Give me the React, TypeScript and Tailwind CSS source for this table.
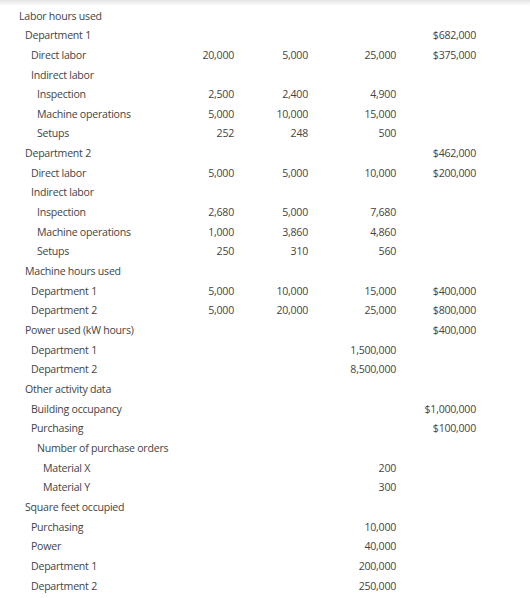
type Row = {
  label: string;
  level: number;
  cols?: [string, string, string, string];
};

const rows: Row[] = [
  { label: 'Labor hours used', level: 0 },
  { label: 'Department 1', level: 1, cols: ['', '', '', '$682,000'] },
  { label: 'Direct labor', level: 2, cols: ['20,000', '5,000', '25,000', '$375,000'] },
  { label: 'Indirect labor', level: 2 },
  { label: 'Inspection', level: 3, cols: ['2,500', '2,400', '4,900', ''] },
  { label: 'Machine operations', level: 3, cols: ['5,000', '10,000', '15,000', ''] },
  { label: 'Setups', level: 3, cols: ['252', '248', '500', ''] },
  { label: 'Department 2', level: 1, cols: ['', '', '', '$462,000'] },
  { label: 'Direct labor', level: 2, cols: ['5,000', '5,000', '10,000', '$200,000'] },
  { label: 'Indirect labor', level: 2 },
  { label: 'Inspection', level: 3, cols: ['2,680', '5,000', '7,680', ''] },
  { label: 'Machine operations', level: 3, cols: ['1,000', '3,860', '4,860', ''] },
  { label: 'Setups', level: 3, cols: ['250', '310', '560', ''] },
  { label: 'Machine hours used', level: 1 },
  { label: 'Department 1', level: 2, cols: ['5,000', '10,000', '15,000', '$400,000'] },
  { label: 'Department 2', level: 2, cols: ['5,000', '20,000', '25,000', '$800,000'] },
  { label: 'Power used (kW hours)', level: 1, cols: ['', '', '', '$400,000'] },
  { label: 'Department 1', level: 2, cols: ['', '', '1,500,000', ''] },
  { label: 'Department 2', level: 2, cols: ['', '', '8,500,000', ''] },
  { label: 'Other activity data', level: 1 },
  { label: 'Building occupancy', level: 2, cols: ['', '', '', '$1,000,000'] },
  { label: 'Purchasing', level: 2, cols: ['', '', '', '$100,000'] },
  { label: 'Number of purchase orders', level: 3 },
  { label: 'Material X', level: 4, cols: ['', '', '200', ''] },
  { label: 'Material Y', level: 4, cols: ['', '', '300', ''] },
  { label: 'Square feet occupied', level: 1 },
  { label: 'Purchasing', level: 2, cols: ['', '', '10,000', ''] },
  { label: 'Power', level: 2, cols: ['', '', '40,000', ''] },
  { label: 'Department 1', level: 2, cols: ['', '', '200,000', ''] },
  { label: 'Department 2', level: 2, cols: ['', '', '250,000', ''] },
];

// indent per level, in px from the left edge
const indent = ['pl-[19px]', 'pl-[25px]', 'pl-[31px]', 'pl-[37px]', 'pl-[43px]'];

export default function App() {
  return (
    <div
      className="w-[530px] h-[598px] bg-white text-[10.6px] tracking-[-0.25px] text-[#444] overflow-hidden"
      style={{ fontFamily: '"Open Sans", "Noto Sans", sans-serif' }}
    >
      {/* top shadow */}
      <div className="h-[6px] bg-gradient-to-b from-[#e4e4e4] to-white" />

      <div className="flex flex-col">
        {rows.map((row, i) => (
          <div
            key={i}
            className="grid grid-cols-[174px_60px_74px_88px_80px] h-[19.66px] items-center leading-none"
          >
            <div className={`${indent[row.level]} whitespace-nowrap`}>{row.label}</div>
            {(row.cols ?? ['', '', '', '']).map((c, j) => (
              <div key={j} className="text-right whitespace-nowrap">
                {c}
              </div>
            ))}
          </div>
        ))}
      </div>
    </div>
  );
}
